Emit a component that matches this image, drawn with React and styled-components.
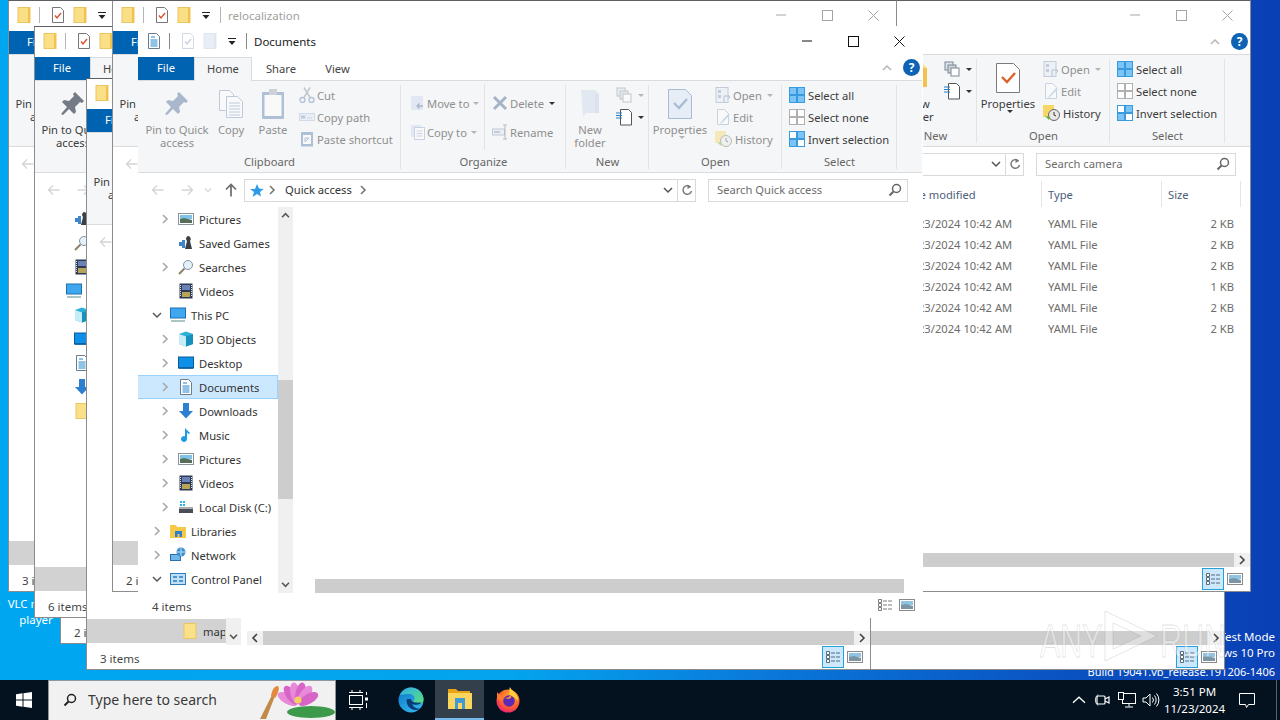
import React from "react";
import styled, { createGlobalStyle } from "styled-components";

const Global = createGlobalStyle`
  html, body { margin: 0; padding: 0; width: 1280px; height: 720px; overflow: hidden; }
  body { font-family: "Noto Sans", "Open Sans", sans-serif; font-size: 11.2px; color: #3c3c3c; }
  #root { width: 1280px; height: 720px; }
`;

const Screen = styled.div`
  width: 1280px;
  height: 720px;
  display: flex;
  flex-direction: column;
  overflow: hidden;
`;

const Wallpaper = styled.div`
  position: relative;
  flex: 1;
  overflow: hidden;
  background: linear-gradient(90deg, #00a6f0 0%, #04a4ee 40%, #0a78da 60%, #0a50c0 85%, #0a3fb5 100%);
`;

const DesktopIcon = styled.div`
  position: absolute;
  left: 1px;
  top: 556px;
  width: 70px;
  display: flex;
  flex-direction: column;
  align-items: center;
  gap: 6px;
  color: #fff;
  font-size: 11.5px;
  line-height: 16px;
  text-align: center;
`;

const Notice = styled.div`
  position: absolute;
  right: 5px;
  top: 629px;
  color: #fff;
  font-size: 11.5px;
  line-height: 16px;
  text-align: right;
  white-space: nowrap;
`;

const BuildLine = styled.div`
  margin-top: 3px;
  font-size: 11px;
`;

const Watermark = styled.div`
  position: absolute;
  left: 1040px;
  top: 609px;
  width: 186px;
  height: 54px;
  z-index: 1;
  display: flex;
  align-items: center;
  justify-content: space-between;
  color: rgba(255, 255, 255, 0.42);
  -webkit-text-stroke: 1px rgba(130, 130, 130, 0.22);
  font-family: "Liberation Sans", sans-serif;
  font-size: 46px;
  line-height: 54px;
`;

const MarkWord = styled.span`
  display: inline-block;
  width: 60px;
  margin-top: 10px;
  white-space: nowrap;
  transform: scaleX(0.66);
  transform-origin: ${(p) => (p.$end ? "right" : "left")} center;
  direction: ${(p) => (p.$end ? "rtl" : "ltr")};
`;

/* one explorer window, the desktop is a stack of these */
const Win = styled.div`
  position: absolute;
  left: ${(p) => p.$x}px;
  top: ${(p) => p.$y}px;
  width: 785px;
  height: 592px;
  isolation: isolate;
  box-sizing: border-box;
  display: flex;
  flex-direction: column;
  background: #fff;
  border: 1px solid ${(p) => (p.$active ? "#fff" : "#8c8c8c")};
  border-top-color: ${(p) => (p.$active ? "#fff" : "#5c5f63")};
  border-left: none;
  overflow: hidden;
  &::before {
    content: "";
    position: absolute;
    left: 0;
    top: 0;
    bottom: 0;
    width: 1px;
    z-index: 2;
    background: ${(p) => (p.$active ? "transparent" : "#8c8c8c")};
  }
`;

const TitleBar = styled.div`
  height: 30px;
  flex: none;
  box-sizing: border-box;
  display: flex;
  align-items: center;
  padding: 0 0 2px 8px;
`;

const QatIcon = styled.span`
  display: inline-flex;
  width: 16px;
  height: 18px;
  align-items: center;
  justify-content: center;
  margin-right: ${(p) => p.$gap || 0}px;
`;

const QatSep = styled.span`
  width: 1px;
  height: 16px;
  background: ${(p) => (p.$active ? "#8a8a8a" : "#b5b5b5")};
  margin-right: ${(p) => p.$gap}px;
`;

const TitleText = styled.span`
  font-size: 11.5px;
  color: ${(p) => (p.$active ? "#1a1a1a" : "#a0a0a0")};
`;

const Controls = styled.div`
  margin-left: auto;
  display: flex;
`;

const ControlBtn = styled.span`
  width: 46px;
  height: 28px;
  display: flex;
  align-items: center;
  justify-content: center;
`;

const TabRow = styled.div`
  height: 24px;
  flex: none;
  box-sizing: border-box;
  display: flex;
  align-items: stretch;
  border-bottom: 1px solid #dadbdc;
`;

const FileTab = styled.div`
  width: 56px;
  box-sizing: border-box;
  padding-bottom: 2px;
  background: #0063b1;
  color: #fff;
  display: flex;
  align-items: center;
  justify-content: center;
`;

const Tab = styled.div`
  width: ${(p) => p.$w}px;
  box-sizing: border-box;
  height: ${(p) => (p.$on ? "24px" : "23px")};
  padding-bottom: 2px;
  color: #444;
  display: flex;
  align-items: center;
  justify-content: center;
  background: ${(p) => (p.$on ? "#f5f6f7" : "transparent")};
  border: 1px solid ${(p) => (p.$on ? "#dadbdc" : "transparent")};
  border-bottom: none;
`;

const TabExtras = styled.div`
  margin-left: auto;
  display: flex;
  align-items: center;
  gap: 11px;
  padding: 0 2px 2px 0;
`;

const HelpBadge = styled.span`
  width: 17px;
  height: 17px;
  border-radius: 50%;
  background: #0f63b5;
  color: #fff;
  font-size: 12px;
  font-weight: 700;
  display: flex;
  align-items: center;
  justify-content: center;
`;

const Ribbon = styled.div`
  height: 92px;
  flex: none;
  box-sizing: border-box;
  display: flex;
  background: #f5f6f7;
  border-bottom: 1px solid #dadbdc;
`;

const Group = styled.div`
  width: ${(p) => p.$w}px;
  flex: none;
  box-sizing: border-box;
  display: flex;
  flex-direction: column;
  padding-top: 3px;
  background: linear-gradient(#e2e3e4, #e2e3e4) right 4px / 1px 84px no-repeat;
`;

const GroupBody = styled.div`
  flex: 1;
  min-height: 0;
  display: flex;
  padding-left: ${(p) => p.$pad || 0}px;
`;

const GroupLabel = styled.div`
  height: 19px;
  line-height: 17px;
  text-align: center;
  color: #666;
`;

const LargeBtn = styled.div`
  width: ${(p) => p.$w}px;
  flex: none;
  display: flex;
  flex-direction: column;
  align-items: center;
  padding-top: 4px;
  color: ${(p) => (p.$off ? "#8f8f8f" : "#3c3c3c")};
  text-align: center;
  white-space: nowrap;
  line-height: 13px;
`;

const LargeIcon = styled.span`
  height: 32px;
  margin-bottom: 3px;
  display: flex;
  align-items: center;
  justify-content: center;
`;

const SmallCol = styled.div`
  display: flex;
  flex-direction: column;
  gap: ${(p) => p.$gap || 0}px;
  padding-top: ${(p) => p.$top || 0}px;
  padding-left: ${(p) => p.$pad || 0}px;
  width: ${(p) => (p.$w ? `${p.$w}px` : "auto")};
  flex: none;
  box-sizing: border-box;
  border-right: ${(p) => (p.$rule ? "1px solid #e2e3e4" : "none")};
  margin-bottom: ${(p) => (p.$rule ? "3px" : "0")};
`;

const SmallBtn = styled.div`
  height: 22px;
  display: flex;
  align-items: center;
  gap: ${(p) => p.$gap ?? 3}px;
  white-space: nowrap;
  color: ${(p) => (p.$off ? "#8f8f8f" : "#3c3c3c")};
`;

const Caret = styled.span`
  width: 0;
  height: 0;
  margin-left: 3px;
  border: 3px solid transparent;
  border-top: 3px solid ${(p) => (p.$off ? "#b5b5b5" : "#333")};
  border-bottom: none;
`;

const NavRow = styled.div`
  height: 34px;
  flex: none;
  display: flex;
  align-items: center;
  padding-left: 6px;
`;

const NavBtn = styled.span`
  width: ${(p) => p.$w}px;
  margin-right: ${(p) => p.$gap || 0}px;
  display: flex;
  justify-content: center;
`;

const AddressBox = styled.div`
  width: 452px;
  height: 23px;
  box-sizing: border-box;
  flex: none;
  display: flex;
  align-items: center;
  border: 1px solid #d9d9d9;
  padding-left: 4px;
  color: #333;
`;

const Crumb = styled.span`
  display: inline-flex;
  margin: 0 ${(p) => p.$after ?? 6}px 0 ${(p) => p.$gap || 0}px;
  padding-bottom: 1px;
  white-space: nowrap;
`;

const AddressTail = styled.div`
  margin-left: auto;
  display: flex;
  align-items: center;
  height: 100%;
`;

const AddressDrop = styled.span`
  width: 15px;
  display: flex;
  justify-content: center;
  padding-right: 2px;
`;

const RefreshBtn = styled.span`
  width: 17px;
  height: 100%;
  border-left: 1px solid #d9d9d9;
  display: flex;
  align-items: center;
  justify-content: center;
`;

const SearchBox = styled.div`
  width: 200px;
  height: 23px;
  flex: none;
  box-sizing: border-box;
  margin-left: 12px;
  border: 1px solid #d9d9d9;
  display: flex;
  align-items: center;
  justify-content: space-between;
  padding: 0 5px 1px 8px;
  color: #6d6d6d;
`;

const Body = styled.div`
  flex: 1;
  min-height: 0;
  display: flex;
`;

const NavPane = styled.div`
  width: 155px;
  flex: none;
  display: flex;
`;

const Tree = styled.div`
  width: 140px;
  flex: none;
  overflow: hidden;
`;

const TreeRow = styled.div`
  height: 24px;
  box-sizing: border-box;
  display: flex;
  align-items: center;
  padding-left: ${(p) => 13 + 8 * (p.$level - 1)}px;
  white-space: nowrap;
  overflow: hidden;
  color: #333;
  background: ${(p) => (p.$sel === "on" ? "#cce8ff" : p.$sel === "dim" ? "#d2d2d2" : "transparent")};
  border: 1px solid ${(p) => (p.$sel === "on" ? "#99d1ff" : "transparent")};
  border-width: 1px 1px 1px 0;
`;

const Chev = styled.span`
  width: 12px;
  flex: none;
  margin-right: 7px;
  display: flex;
  justify-content: center;
`;

const TreeLabel = styled.span`
  margin-left: 5px;
`;

const VScroll = styled.div`
  width: 15px;
  flex: none;
  display: flex;
  flex-direction: column;
  background: #f0f0f0;
`;

const ScrollEnd = styled.span`
  height: 17px;
  flex: none;
  display: flex;
  align-items: center;
  justify-content: center;
`;

const VTrack = styled.div`
  flex: 1;
  min-height: 0;
`;

const VThumb = styled.div`
  height: ${(p) => p.$h}px;
  margin-top: ${(p) => p.$top}px;
  background: #cdcdcd;
`;

const Content = styled.div`
  flex: 1;
  min-width: 0;
  margin-left: 6px;
  display: flex;
  flex-direction: column;
`;

const FileList = styled.div`
  flex: 1;
  min-height: 0;
`;

const ListHead = styled.div`
  display: grid;
  grid-template-columns: 268px 147px 120px 79px;
  height: 26px;
  margin-bottom: 6px;
  color: #4c607a;
`;

const HeadCell = styled.div`
  display: flex;
  align-items: center;
  padding-left: 6px;
  box-sizing: border-box;
  border-right: 1px solid #e5e5e5;
`;

const ListRow = styled.div`
  display: grid;
  grid-template-columns: 268px 147px 120px 79px;
  height: 21px;
  align-items: center;
  color: #6d6d6d;
`;

const Cell = styled.div`
  padding: 0 7px 0 6px;
  text-align: ${(p) => (p.$right ? "right" : "left")};
  white-space: nowrap;
`;

const HScroll = styled.div`
  height: 14px;
  flex: none;
  display: flex;
  margin-right: ${(p) => (p.$bare ? 2 : 0)}px;
`;

const HEnd = styled.span`
  width: ${(p) => p.$w}px;
  flex: none;
  display: flex;
  align-items: center;
  justify-content: center;
  background: ${(p) => (p.$bare ? "transparent" : "#f0f0f0")};
  visibility: ${(p) => (p.$bare ? "hidden" : "visible")};
`;

const HThumb = styled.div`
  flex: 1;
  background: #cdcdcd;
`;

const StatusBar = styled.div`
  height: 24px;
  flex: none;
  box-sizing: border-box;
  display: flex;
  align-items: center;
  padding: 2px 0 0 14px;
  color: #444;
  font-size: 11.5px;
`;

const ViewBtns = styled.div`
  margin-left: auto;
  display: flex;
  padding-right: 4px;
  margin-top: -2px;
`;

const ViewBtn = styled.span`
  width: 22px;
  height: 22px;
  box-sizing: border-box;
  display: flex;
  align-items: center;
  justify-content: center;
  background: ${(p) => (p.$on ? "#cce8ff" : "transparent")};
  border: 1px solid ${(p) => (p.$on ? "#26a0da" : "transparent")};
`;

const Taskbar = styled.div`
  height: 40px;
  flex: none;
  display: flex;
  align-items: stretch;
  background: #04121f;
  color: #fff;
`;

const TaskBtn = styled.div`
  width: ${(p) => p.$w || 48}px;
  flex: none;
  box-sizing: border-box;
  display: flex;
  align-items: center;
  justify-content: center;
  background: ${(p) => (p.$on ? "#33404c" : "transparent")};
  border-bottom: ${(p) => (p.$on ? "2px solid #76b9ed" : "none")};
`;

const SearchBar = styled.div`
  width: 288px;
  flex: none;
  box-sizing: border-box;
  display: flex;
  align-items: center;
  padding: 0 0 2px 14px;
  gap: 11px;
  background: #f1f1f1;
  border: 1px solid #8f969c;
  border-bottom: none;
  color: #3a3a3a;
  font-size: 14px;
  overflow: hidden;
`;

const SearchArt = styled.span`
  margin-left: auto;
  height: 38px;
  margin-top: 1px;
`;

const Tray = styled.div`
  margin-left: auto;
  display: flex;
  align-items: stretch;
`;

const TrayIcon = styled.span`
  width: ${(p) => p.$w || 24}px;
  display: flex;
  align-items: center;
  justify-content: center;
`;

const Clock = styled.div`
  width: 65px;
  display: flex;
  flex-direction: column;
  align-items: center;
  justify-content: center;
  font-size: 11.5px;
  line-height: 17px;
`;

const ShowDesktop = styled.span`
  width: 13px;
  box-sizing: border-box;
  padding-left: 9px;
  display: block;
  &::after { content: ""; display: block; width: 1px; height: 40px; background: #56616b; }
`;

/* ---------- small drawings ---------- */

const Svg = ({ s = 16, w, h, off, children }) => (
  <svg width={w || s} height={h || s} viewBox={`0 0 ${w || s} ${h || s}`} opacity={off ? 0.42 : 1} style={{ flex: "none" }}>
    {children}
  </svg>
);

const FolderQat = ({ off }) => (
  <Svg off={off}>
    <rect x="2" y="0.5" width="12" height="15" fill={off ? "#c9d6ea" : "#fbdf87"} stroke={off ? "#b9c8e0" : "#ecc662"} />
    <rect x="12" y="1" width="2" height="14" fill={off ? "#b9c8e0" : "#f2c14e"} />
  </Svg>
);

const CheckDoc = ({ off }) => (
  <Svg off={off}>
    <path d="M2.5.5h8l3 3v12h-11z" fill="#fff" stroke={off ? "#8fa6c6" : "#777"} />
    <path d="M5 8.5l2 2.5 4-5" fill="none" stroke={off ? "#7d95b8" : "#d8512c"} strokeWidth="1.4" />
  </Svg>
);

const DocIco = () => (
  <Svg>
    <path d="M2.5.5h8l3 3v12h-11z" fill="#fff" stroke="#6e7b88" />
    <path d="M5 4h4M4.5 7h7M4.5 9h7M4.5 11h7M4.5 13h7" stroke="#1f86d0" strokeWidth="1" />
  </Svg>
);

const CustomizeArrow = () => (
  <Svg s={10}>
    <path d="M1 2.5h8" stroke="#222" />
    <path d="M1.5 5h7L5 9z" fill="#222" />
  </Svg>
);

const Back = ({ up }) => (
  <Svg s={14}>
    {up ? (
      <path d="M7 1.5v12M2 6.5l5-5 5 5" fill="none" stroke="#6b6b6b" strokeWidth="1.7" />
    ) : (
      <path d="M12.5 7h-11M6 2.5L1.5 7 6 11.5" fill="none" stroke="#d5d5d5" strokeWidth="1.4" />
    )}
  </Svg>
);

const Forward = () => (
  <Svg s={14}>
    <path d="M1.5 7h11M8 2.5L12.5 7 8 11.5" fill="none" stroke="#d5d5d5" strokeWidth="1.4" />
  </Svg>
);

const Vee = ({ s = 8, c = "#d5d5d5", up, w = 1.3 }) => (
  <Svg s={s}>
    <path d={up ? `M1 ${s * 0.7}L${s / 2} ${s * 0.3}L${s - 1} ${s * 0.7}` : `M1 ${s * 0.3}L${s / 2} ${s * 0.7}L${s - 1} ${s * 0.3}`} fill="none" stroke={c} strokeWidth={w} />
  </Svg>
);

const Side = ({ c = "#a9a9a9", left }) => (
  <Svg s={10}>
    <path d={left ? "M7 1L3 5l4 4" : "M3 1l4 4-4 4"} fill="none" stroke={c} strokeWidth="1.6" />
  </Svg>
);

const Pin = ({ off }) => (
  <Svg s={30}>
    <path d="M17 3l9 9-2 2-2-1-5 5 1 5-2 2-5-5-6 6-2-1 6-7-5-5 2-2 5 1 5-5-1-2z" fill={off ? "#a9b7cc" : "#757b84"} />
  </Svg>
);

const CopyLarge = ({ off }) => (
  <Svg w={28} h={30} off={off}>
    <path d="M2.5 1.5h10l4 4v16h-14z" fill="#fff" stroke="#6f8fb8" />
    <path d="M9.5 7.5h11l5 5v16h-16z" fill="#fff" stroke="#6f8fb8" />
    <path d="M12 14h11M12 17h11M12 20h11M12 23h11M12 26h11" stroke="#6f8fb8" />
  </Svg>
);

const PasteLarge = ({ off }) => (
  <Svg w={26} h={32} off={off}>
    <rect x="2" y="4" width="22" height="27" rx="1" fill="#4f76a8" />
    <rect x="4.5" y="7" width="17" height="21" fill="#fff" />
    <rect x="9" y="1" width="8" height="6" fill="#9aa0a8" />
  </Svg>
);

const Scissors = ({ off }) => (
  <Svg off={off}>
    <circle cx="3.5" cy="13" r="2.5" fill="none" stroke="#5b7fb0" strokeWidth="1.4" />
    <circle cx="12.5" cy="13" r="2.5" fill="none" stroke="#5b7fb0" strokeWidth="1.4" />
    <path d="M5 10.5L11 .5M11 10.5L5 .5" stroke="#7b8794" strokeWidth="1.5" />
  </Svg>
);

const CopyPath = ({ off }) => (
  <Svg off={off}>
    <rect x="0.5" y="4.5" width="15" height="7" fill="#dbe6f5" stroke="#9fb6d5" />
    <path d="M2 6.5l1 3 1-3 1 3 1-3M8 9h1M10 9h1M12 9h1" stroke="#5b7fb0" fill="none" />
  </Svg>
);

const PasteShort = ({ off }) => (
  <Svg off={off}>
    <rect x="2" y="1" width="12" height="14.5" fill="#4f76a8" />
    <rect x="4" y="4" width="8" height="9" fill="#fff" />
    <path d="M6 11V7h4M10 7L6.5 10.5" stroke="#4a78b5" fill="none" />
  </Svg>
);

const MoveTo = ({ off }) => (
  <Svg off={off}>
    <rect x="1" y="1" width="12" height="14" fill="#c6d6ee" />
    <path d="M13 11H7M9.5 8.5L7 11l2.5 2.5" stroke="#43638f" fill="none" strokeWidth="1.3" />
  </Svg>
);

const CopyTo = ({ off }) => (
  <Svg off={off}>
    <rect x="1" y="1" width="10" height="12" fill="#c6d6ee" />
    <rect x="4.5" y="3.5" width="10" height="12" fill="#fff" stroke="#8aa3c8" />
    <path d="M6.5 7h6M6.5 9.500h6M6.500 12h6" stroke="#8aa3c8" />
  </Svg>
);

const DeleteX = ({ off }) => (
  <Svg off={off}>
    <path d="M2 2l12 12M14 2L2 14" stroke="#3c5c85" strokeWidth="3" />
  </Svg>
);

const Rename = ({ off }) => (
  <Svg off={off}>
    <rect x="0.500" y="5" width="12" height="6" fill="#dbe6f5" stroke="#7d8ea6" />
    <rect x="2" y="7" width="6" height="2" fill="#7d8ea6" />
    <path d="M11 1h4M13 1v14M11 15h4" stroke="#667" />
  </Svg>
);

const NewFolderLarge = ({ off }) => (
  <Svg w={20} h={30} off={off}>
    <path d="M1 1h14l4 4v19H6l-3 4z" fill={off ? "#c9d6ea" : "#fbdf87"} />
    <rect x="15" y="5" width="4" height="19" fill={off ? "#b9c8e0" : "#f2c14e"} />
  </Svg>
);

const NewItem = ({ off }) => (
  <Svg off={off}>
    <rect x="1" y="1" width="8" height="8" fill="#dfe4ea" stroke="#7b8794" />
    <rect x="4" y="4" width="8" height="8" fill="#ccd4de" stroke="#7b8794" />
    <rect x="7" y="7" width="8" height="8" fill="#fff" stroke="#7b8794" />
  </Svg>
);

const EasyAccess = ({ off }) => (
  <Svg w={16} h={17} off={off}>
    <path d="M4.500.500h8l3 3v12.500h-11z" fill="#fff" stroke="#555" />
    <path d="M0 4h6M0 6.500h6M0 9h6" stroke="#2680c8" />
  </Svg>
);

const PropsLarge = ({ off }) => (
  <Svg w={24} h={30}>
    <path d="M.5.500h17l6 6v23H.5z" fill={off ? "#e6edf6" : "#fff"} stroke={off ? "#a9bcd6" : "#7b7b7b"} />
    <path d="M6 14l5 5 8-9" fill="none" stroke={off ? "#a9bcd6" : "#d9622b"} strokeWidth="2.400" />
  </Svg>
);

const OpenDoc = ({ off }) => (
  <Svg off={off}>
    <rect x="1" y="0.500" width="12" height="15" fill="#e3eaf4" stroke="#7d93b3" />
    <path d="M3 3h3v3H3zM3 8h3v3H3z" fill="#7d93b3" />
    <path d="M9 15V9h5M13 8l2 2-2 2" stroke="#5b7fb0" fill="none" />
  </Svg>
);

const EditDoc = ({ off }) => (
  <Svg off={off}>
    <path d="M2.500.500h7l4 4v11h-11z" fill="#fff" stroke="#8aa3c8" />
    <path d="M13 5L6 13l-1 2 2-1 8-8z" fill="#8fb4de" />
  </Svg>
);

const History = ({ off }) => (
  <Svg w={18} h={16} off={off}>
    <rect x="0" y="0" width="11" height="12" fill="#f7d766" />
    <circle cx="11" cy="10" r="5.500" fill="#e8e8e8" stroke="#666" />
    <path d="M11 7v3l2 1" stroke="#333" fill="none" />
    <path d="M2 11l4 4 1-3z" fill="#5fb030" />
  </Svg>
);

const SelGrid = ({ mode }) => {
  const cells = [[1, 1], [9, 1], [1, 9], [9, 9]];
  const lit = mode === "all" ? [0, 1, 2, 3] : mode === "invert" ? [1, 2] : [];
  return (
    <Svg>
      {cells.map(([x, y], i) => (
        <rect key={i} x={x - 0.5} y={y - 0.5} width="7" height="7" fill={lit.includes(i) ? "#7cc4f5" : "#fff"} stroke={lit.includes(i) ? "#3a9ae0" : mode === "none" ? "#b0b0b0" : "#3a9ae0"} />
      ))}
    </Svg>
  );
};

const Magnify = ({ c = "#666" }) => (
  <Svg s={14}>
    <circle cx="8.500" cy="5.500" r="4" fill="none" stroke={c} strokeWidth="1.500" />
    <path d="M5.500 8.500l-4 4" stroke={c} strokeWidth="2" />
  </Svg>
);

const Refresh = () => (
  <Svg s={12}>
    <path d="M9.500 3A4.300 4.300 0 1 0 10.500 7" fill="none" stroke="#777" strokeWidth="1.400" />
    <path d="M6.500 0.500l3.500 2.500-3.500 2z" fill="#777" />
  </Svg>
);

const Star = () => (
  <Svg s={15}>
    <path d="M8 1l2 4.500 4.500.500-3.500 3 1 4.500-4-2.400-4.500 2.900 1.500-5L1 6h5z" fill="#2d9be8" />
  </Svg>
);

const Pictures = () => (
  <Svg>
    <rect x="0.500" y="2.500" width="15" height="11" fill="#fff" stroke="#8a929a" />
    <rect x="2" y="4" width="12" height="4" fill="#7fc3e8" />
    <path d="M2 8l4-1 8 2v3H2z" fill="#55705a" />
  </Svg>
);

const SavedGames = () => (
  <Svg>
    <path d="M1 7h3V5h3v8H4v-2H1z" fill="#3f86c8" />
    <path d="M10 1a3 3 0 0 1 2 5l2 8H7l2-8a3 3 0 0 1 1-5z" fill="#3c3f44" />
  </Svg>
);

const Searches = () => (
  <Svg>
    <circle cx="10" cy="6" r="4.500" fill="#e5f1fa" stroke="#7d93a8" />
    <path d="M6.500 9.500L1 15" stroke="#8a7a66" strokeWidth="1.800" />
  </Svg>
);

const Videos = () => (
  <Svg>
    <rect x="1.500" y="0.500" width="13" height="15" fill="#2e3a55" />
    <rect x="4" y="2" width="8" height="5" fill="#6a82b8" />
    <rect x="4" y="9" width="8" height="5" fill="#b7a458" />
    <path d="M2.500 2v12M13.500 2v12" stroke="#dfe3ea" strokeDasharray="1 1" />
  </Svg>
);

const ThisPC = () => (
  <Svg>
    <rect x="0.500" y="1" width="15" height="10" fill="#3fa7ee" stroke="#1d6fb3" />
    <path d="M1 14h14" stroke="#7ba7a4" strokeWidth="1.300" />
  </Svg>
);

const Cube = () => (
  <Svg>
    <path d="M1 3l7-2.500L15 3v10l-7 2.500L1 13z" fill="#2db0d8" />
    <path d="M1 3l7 2.500v10L1 13z" fill="#c5edf6" />
    <path d="M8 5.500L15 3v10l-7 2.500z" fill="#1790bc" />
  </Svg>
);

const DesktopIco = () => (
  <Svg>
    <rect x="0.500" y="2" width="15" height="11" fill="#0e8fe8" stroke="#075c9c" />
    <path d="M1 13h14" stroke="#075c9c" strokeWidth="1.500" />
  </Svg>
);

const Downloads = () => (
  <Svg>
    <path d="M5 0h6v8h4l-7 7.500L1 8h4z" fill="#2d7fd0" />
  </Svg>
);

const Music = () => (
  <Svg>
    <path d="M7 1l5 5-1.200 1.200L9 5.500V12a3 3 0 1 1-2-2.800z" fill="#1d9be2" />
  </Svg>
);

const Disk = () => (
  <Svg>
    <rect x="1" y="9" width="14" height="5" fill="#4a4f55" />
    <rect x="1" y="8" width="14" height="2" fill="#a8adb3" />
    <path d="M2 2h2v2H2zM5 2h2v2H5zM2 5h2v2H2zM5 5h2v2H5z" fill="#26b6e8" />
  </Svg>
);

const Libraries = () => (
  <Svg>
    <path d="M0 2h6l1 2h9v11H0z" fill="#f7c948" />
    <rect x="5" y="8" width="7" height="6" fill="#2d7fd0" />
    <rect x="7.500" y="11" width="2" height="3" fill="#f7c948" />
  </Svg>
);

const Network = () => (
  <Svg>
    <rect x="0.500" y="7.500" width="10" height="6" fill="#6fb7e8" stroke="#2c6ea8" />
    <circle cx="11" cy="5" r="4.500" fill="#3f8fd0" />
    <path d="M7 5h8M11 1v8" stroke="#bfe0f5" />
  </Svg>
);

const ControlPanel = () => (
  <Svg>
    <rect x="0.500" y="2.500" width="15" height="11" fill="#bfe0f5" stroke="#2c7cbd" />
    <path d="M3 6h4M9 6h4M3 10h4M9 10h4" stroke="#2c7cbd" strokeWidth="1.500" />
  </Svg>
);

const Folder = () => (
  <Svg>
    <rect x="2" y="0.500" width="12" height="15" fill="#fbe08a" stroke="#ecc662" />
  </Svg>
);

const DetailsView = ({ c = "#7d7d7d" }) => (
  <Svg>
    <path d="M1.500 2.500h3v3h-3zM1.500 6.500h3v3h-3zM1.500 10.500h3v3h-3z" fill="#fff" stroke={c} />
    <path d="M6 4h4M11 4h4M6 8h4M11 8h4M6 12h4M11 12h4" stroke={c} />
  </Svg>
);

const LargeView = () => (
  <Svg>
    <rect x="0.500" y="2.500" width="15" height="11" fill="#fff" stroke="#8a8a8a" />
    <rect x="2" y="4" width="12" height="4" fill="#8fc4e4" />
    <path d="M2 8l5-1 7 2v3H2z" fill="#7c95a4" />
  </Svg>
);

const Play = () => (
  <svg width="62" height="54" viewBox="0 0 62 54" style={{ flex: "none" }}>
    <path d="M3 2l52 25L3 52zM11 14v26l28-13z" fill="rgba(255,255,255,0.34)" stroke="rgba(130,130,130,0.2)" fillRule="evenodd" />
  </svg>
);

const Cone = () => (
  <Svg w={32} h={34}>
    <path d="M12 2h8l8 28H4z" fill="#f08a1d" />
    <rect x="2" y="30" width="28" height="4" fill="#e7e7e7" />
  </Svg>
);

const WinLogo = () => (
  <Svg>
    <path d="M0 2.200l6.500-.900v6.200H0zM7.500 1.200L16 0v7.500H7.500zM0 8.500h6.500v6.200L0 13.800zM7.500 8.500H16V16l-8.500-1.200z" fill="#fff" />
  </Svg>
);

const TaskView = () => (
  <Svg w={24} h={20}>
    <rect x="1.500" y="5.500" width="13" height="9" fill="none" stroke="#fff" />
    <path d="M1 2.500h14M1 17.500h14M4 2.500V0M12 2.500V0M4 20v-2.500M12 20v-2.500" stroke="#fff" />
    <rect x="17" y="7.500" width="3" height="3" fill="#fff" />
    <path d="M18.500 2v3M18.500 13v5" stroke="#fff" />
  </Svg>
);

const Edge = () => (
  <svg width="26" height="26" viewBox="0 0 26 26">
    <defs>
      <linearGradient id="edgeBlue" x1="0" y1="0" x2="0.600" y2="1">
        <stop offset="0" stopColor="#0a74c4" />
        <stop offset="1" stopColor="#2fb3ee" />
      </linearGradient>
      <linearGradient id="edgeGreen" x1="0" y1="0" x2="1" y2="1">
        <stop offset="0" stopColor="#2bb0e8" />
        <stop offset="1" stopColor="#5fe07a" />
      </linearGradient>
    </defs>
    <circle cx="13" cy="13" r="12.500" fill="url(#edgeBlue)" />
    <path d="M2 8C4 3 9 .5 13 .5 20 .5 25.500 6 25.500 12.500c0 3-3 5-6.500 5-2.500 0-5-1-5-2 1.500-1 2.500-2.500 2.500-4 0-3-3-5-7-4.500C6 7.500 4 7.500 2 8z" fill="url(#edgeGreen)" />
    <path d="M8.500 13.500c0 5 4 9.500 9 9.500 2 0 3.500-.500 5-2-2 1-4 .500-5.500-.500-1.500-1-2.500-2-2.500-3.500 3 1.500 7 1 9-1.500-2 0-6 .500-8-.500-1.500-.500-2.500-2-2.500-3-1 0-5-.500-4.500 1.500z" fill="#0b3c78" />
  </svg>
);

const ExplorerIco = () => (
  <Svg w={24} h={22}>
    <path d="M0 1h8l2 2h12v3H0z" fill="#e8a317" />
    <rect x="0" y="5" width="24" height="16" fill="#fbd65e" />
    <rect x="7" y="10" width="10" height="11" fill="#3f9ad6" />
    <rect x="10" y="15" width="4" height="6" fill="#fbd65e" />
  </Svg>
);

const Firefox = () => (
  <svg width="24" height="26" viewBox="0 0 24 26">
    <defs>
      <radialGradient id="foxGlow" cx="0.600" cy="0.300" r="0.800">
        <stop offset="0" stopColor="#ffb02e" />
        <stop offset="0.600" stopColor="#ff5b2e" />
        <stop offset="1" stopColor="#e31587" />
      </radialGradient>
    </defs>
    <circle cx="12" cy="14" r="11.500" fill="url(#foxGlow)" />
    <path d="M14 0c1 3 4 4 6 7 2 2 2 5 2 7-3-4-5-4-8-6-1-3-1-5 0-8z" fill="#ffcf3a" />
    <path d="M1 5c2 2 3 4 7 4l-3 5L1 12z" fill="#ff7a2e" />
    <circle cx="13" cy="14" r="5.800" fill="#5b2bb5" />
    <path d="M8 11c3 0 5-1 7-3 1 2 0 3-2 4z" fill="#ff8a2e" />
  </svg>
);

const Lotus = () => (
  <svg width="76" height="38" viewBox="0 0 76 38">
    <path d="M1 38l12-24 3 1-9 23z" fill="#c28a4a" />
    <path d="M12 15c1-6 3-10 7-10 2 2 0 8-3 12z" fill="#e58a3c" />
    <ellipse cx="52" cy="31" rx="24" ry="6" fill="#3c9a4a" />
    {[-60, -35, -12, 12, 35, 60].map((a, i) => (
      <ellipse key={i} cx="39" cy="12" rx="5" ry="11" fill={i % 2 ? "#d765c8" : "#e88ad8"} transform={`rotate(${a} 39 24)`} />
    ))}
    <circle cx="39" cy="19" r="3.500" fill="#f2d25c" />
  </svg>
);

const TrayCam = () => (
  <Svg w={18} h={18}>
    <path d="M4 3.500a7 7 0 0 0 0 11" fill="none" stroke="#ddd" />
    <rect x="3" y="5" width="8" height="8" rx="1" fill="none" stroke="#fff" strokeWidth="1.200" />
    <path d="M11 8l4-2v6l-4-2" fill="none" stroke="#fff" strokeWidth="1.200" />
  </Svg>
);

const TrayNet = () => (
  <Svg w={18} h={18}>
    <rect x="4.500" y="2.500" width="13" height="10" fill="none" stroke="#fff" />
    <rect x="0.500" y="1.500" width="5" height="7" fill="#04121f" stroke="#fff" />
    <path d="M11 12.500v3M7 16h8" stroke="#fff" />
  </Svg>
);

const TrayVol = () => (
  <Svg w={18} h={18}>
    <path d="M1 7v4h3l4 4V3L4 7z" fill="none" stroke="#fff" />
    <path d="M10.500 6.500a4 4 0 0 1 0 5M12.500 4.500a7 7 0 0 1 0 9M14.500 2.500a10 10 0 0 1 0 13" fill="none" stroke="#fff" />
  </Svg>
);

const TrayNote = () => (
  <Svg w={18} h={18}>
    <path d="M1.500 2.500h15v11h-6l-2 3-1-3h-6z" fill="none" stroke="#fff" />
  </Svg>
);

/* ---------- window ---------- */

const frontTree = [
  { level: 2, label: "Pictures", icon: <Pictures />, chev: "side" },
  { level: 2, label: "Saved Games", icon: <SavedGames /> },
  { level: 2, label: "Searches", icon: <Searches />, chev: "side" },
  { level: 2, label: "Videos", icon: <Videos /> },
  { level: 1, label: "This PC", icon: <ThisPC />, chev: "open" },
  { level: 2, label: "3D Objects", icon: <Cube />, chev: "side" },
  { level: 2, label: "Desktop", icon: <DesktopIco />, chev: "side" },
  { level: 2, label: "Documents", icon: <DocIco />, chev: "side", sel: "on" },
  { level: 2, label: "Downloads", icon: <Downloads />, chev: "side" },
  { level: 2, label: "Music", icon: <Music />, chev: "side" },
  { level: 2, label: "Pictures", icon: <Pictures />, chev: "side" },
  { level: 2, label: "Videos", icon: <Videos />, chev: "side" },
  { level: 2, label: "Local Disk (C:)", icon: <Disk />, chev: "side" },
  { level: 1, label: "Libraries", icon: <Libraries />, chev: "side" },
  { level: 1, label: "Network", icon: <Network />, chev: "side" },
  { level: 1, label: "Control Panel", icon: <ControlPanel />, chev: "open" },
];

// windows further back: their labels are covered, only icons at the edge and the selected row show
const backTree = (selected) => [
  { level: 2, icon: <SavedGames /> },
  { level: 2, icon: <Searches /> },
  { level: 2, icon: <Videos /> },
  { level: 1, icon: <ThisPC /> },
  { level: 2, icon: <Cube /> },
  { level: 2, icon: <DesktopIco /> },
  { level: 2, icon: <DocIco /> },
  { level: 2, icon: <Downloads /> },
  { level: 2, icon: <Folder /> },
  ...[9, 10, 11, 12, 13, 14].map(() => ({ spacer: true })),
  { level: 9, label: selected, icon: <Folder />, sel: "dim" },
];

const cameraFiles = ["2 KB", "2 KB", "2 KB", "1 KB", "2 KB", "2 KB"];

// parts: which ribbon groups this window still shows past the windows stacked over it
function WindowRibbon({ quick, propsOn, parts }) {
  const off = quick;
  const has = (name) => parts.includes(name);
  return (
    <Ribbon>
      <Group $w={263}>
        {(has("clipboard") || has("pin")) && (
          <>
            <GroupBody $pad={8}>
              <LargeBtn $w={62} $off={off}>
                <LargeIcon><Pin off={off} /></LargeIcon>
                Pin to Quick
                <br />
                access
              </LargeBtn>
              {has("clipboard") && (
                <>
                  <LargeBtn $w={46} $off={off}>
                    <LargeIcon><CopyLarge off={off} /></LargeIcon>
                    Copy
                  </LargeBtn>
                  <LargeBtn $w={38} $off={off}>
                    <LargeIcon><PasteLarge off={off} /></LargeIcon>
                    Paste
                  </LargeBtn>
                  <SmallCol $pad={7}>
                    <SmallBtn $off={off} $gap={2}><Scissors off={off} />Cut</SmallBtn>
                    <SmallBtn $off={off} $gap={2}><CopyPath off={off} />Copy path</SmallBtn>
                    <SmallBtn $off={off} $gap={2}><PasteShort off={off} />Paste shortcut</SmallBtn>
                  </SmallCol>
                </>
              )}
            </GroupBody>
            {has("clipboard") && <GroupLabel>Clipboard</GroupLabel>}
          </>
        )}
      </Group>
      <Group $w={165}>
        {has("organize") && (
          <>
            <GroupBody $pad={9}>
              <SmallCol $w={75} $top={8} $gap={7} $rule>
                <SmallBtn $off={off} $gap={1}><MoveTo off={off} />Move to<Caret $off /></SmallBtn>
                <SmallBtn $off={off} $gap={1}><CopyTo off={off} />Copy to<Caret $off /></SmallBtn>
              </SmallCol>
              <SmallCol $pad={7} $top={8} $gap={7}>
                <SmallBtn $off={off} $gap={2}><DeleteX off={off} />Delete<Caret /></SmallBtn>
                <SmallBtn $off={off} $gap={2}><Rename off={off} />Rename</SmallBtn>
              </SmallCol>
            </GroupBody>
            <GroupLabel>Organize</GroupLabel>
          </>
        )}
      </Group>
      {has("new") && (
        <>
          <Group $w={83}>
            <GroupBody>
              <LargeBtn $w={48} $off={off}>
                <LargeIcon><NewFolderLarge off={off} /></LargeIcon>
                New
                <br />
                folder
              </LargeBtn>
              <SmallCol $pad={2}>
                <SmallBtn><NewItem off={off} /><Caret $off={off} /></SmallBtn>
                <SmallBtn><EasyAccess /><Caret /></SmallBtn>
              </SmallCol>
            </GroupBody>
            <GroupLabel>New</GroupLabel>
          </Group>
          <Group $w={133}>
            <GroupBody>
              <LargeBtn $w={62} $off={!propsOn}>
                <LargeIcon><PropsLarge off={!propsOn} /></LargeIcon>
                Properties
                <Caret $off={!propsOn} />
              </LargeBtn>
              <SmallCol $pad={4}>
                <SmallBtn $off $gap={2}><OpenDoc off />Open<Caret $off /></SmallBtn>
                <SmallBtn $off $gap={2}><EditDoc off />Edit</SmallBtn>
                <SmallBtn $off={!propsOn} $gap={2}><History off={!propsOn} />History</SmallBtn>
              </SmallCol>
            </GroupBody>
            <GroupLabel>Open</GroupLabel>
          </Group>
          <Group $w={115}>
            <GroupBody $pad={7}>
              <SmallCol>
                <SmallBtn><SelGrid mode="all" />Select all</SmallBtn>
                <SmallBtn><SelGrid mode="none" />Select none</SmallBtn>
                <SmallBtn><SelGrid mode="invert" />Invert selection</SmallBtn>
              </SmallCol>
            </GroupBody>
            <GroupLabel>Select</GroupLabel>
          </Group>
        </>
      )}
    </Ribbon>
  );
}

function ExplorerWindow({ x, y, title, active, quick, qatIcon, tree = [], thumb, files, items, search, propsOn, bareScroll, plainView, tabs = [], parts = [] }) {
  const ctl = active ? "#111" : "#a5a5a5";
  return (
    <Win $x={x} $y={y} $active={active}>
      <TitleBar>
        <QatIcon $gap={7}>{qatIcon || <FolderQat />}</QatIcon>
        <QatSep $gap={10} $active={active} />
        <QatIcon $gap={6}><CheckDoc off={quick} /></QatIcon>
        <QatIcon $gap={6}><FolderQat off={quick} /></QatIcon>
        <QatIcon $gap={6}><CustomizeArrow /></QatIcon>
        <QatSep $gap={7} $active={active} />
        {title && <TitleText $active={active}>{title}</TitleText>}
        <Controls>
          <ControlBtn><Svg s={10}><path d="M0 5h10" stroke={ctl} /></Svg></ControlBtn>
          <ControlBtn><Svg s={11}><rect x="0.500" y="0.500" width="10" height="10" fill="none" stroke={ctl} /></Svg></ControlBtn>
          <ControlBtn><Svg s={11}><path d="M.5.500l10 10M10.500.500l-10 10" stroke={ctl} /></Svg></ControlBtn>
        </Controls>
      </TitleBar>
      <TabRow>
        <FileTab>File</FileTab>
        <Tab $w={58} $on>{tabs.includes("Home") && "Home"}</Tab>
        <Tab $w={58}>{tabs.includes("Share") && "Share"}</Tab>
        <Tab $w={55}>{tabs.includes("View") && "View"}</Tab>
        <TabExtras>
          <Vee s={10} c="#b5b5b5" up w={1.5} />
          <HelpBadge>?</HelpBadge>
        </TabExtras>
      </TabRow>
      <WindowRibbon quick={quick} propsOn={propsOn} parts={parts} />
      <NavRow>
        <NavBtn $w={27}><Back /></NavBtn>
        <NavBtn $w={31}><Forward /></NavBtn>
        <NavBtn $w={12} $gap={4}><Vee /></NavBtn>
        <NavBtn $w={26}><Back up /></NavBtn>
        <AddressBox>
          <Star />
          <Crumb $gap={3} $after={8}><Side c="#777" /></Crumb>
          {quick ? <Crumb>Quick access</Crumb> : null}
          {quick ? <Side c="#777" /> : null}
          <AddressTail>
            <AddressDrop><Vee s={10} c="#555" w={1.5} /></AddressDrop>
            <RefreshBtn><Refresh /></RefreshBtn>
          </AddressTail>
        </AddressBox>
        <SearchBox>{search}<Magnify /></SearchBox>
      </NavRow>
      <Body>
        <NavPane>
          <Tree>
            {tree.map((row, i) =>
              row.spacer ? (
                <TreeRow key={i} $level={1} />
              ) : (
                <TreeRow key={i} $level={row.level} $sel={row.sel}>
                  <Chev>
                    {row.chev === "side" && <Side />}
                    {row.chev === "open" && <Vee s={10} c="#555" w={1.5} />}
                  </Chev>
                  {row.icon}
                  {row.label && <TreeLabel>{row.label}</TreeLabel>}
                </TreeRow>
              )
            )}
          </Tree>
          <VScroll>
            <ScrollEnd><Vee s={9} c="#555" up w={1.5} /></ScrollEnd>
            <VTrack>{thumb && <VThumb $top={thumb.top} $h={thumb.height} />}</VTrack>
            <ScrollEnd><Vee s={9} c="#555" w={1.5} /></ScrollEnd>
          </VScroll>
        </NavPane>
        <Content>
          <FileList>
            {files && (
              <>
                <ListHead>
                  <HeadCell />
                  <HeadCell>Date modified</HeadCell>
                  <HeadCell>Type</HeadCell>
                  <HeadCell>Size</HeadCell>
                </ListHead>
                {files.map((size, i) => (
                  <ListRow key={i}>
                    <Cell />
                    <Cell>11/23/2024 10:42 AM</Cell>
                    <Cell>YAML File</Cell>
                    <Cell $right>{size}</Cell>
                  </ListRow>
                ))}
              </>
            )}
          </FileList>
          <HScroll $bare={bareScroll}>
            <HEnd $w={16} $bare={bareScroll}><Side c="#444" left /></HEnd>
            <HThumb />
            <HEnd $w={16} $bare={bareScroll}><Side c="#444" /></HEnd>
          </HScroll>
        </Content>
      </Body>
      <StatusBar>
        {items}
        <ViewBtns>
          <ViewBtn $on={!plainView}><DetailsView c={plainView ? "#7d7d7d" : "#5b6a75"} /></ViewBtn>
          <ViewBtn><LargeView /></ViewBtn>
        </ViewBtns>
      </StatusBar>
    </Win>
  );
}

export default function App() {
  return (
    <Screen>
      <Global />
      <Wallpaper>
        <DesktopIcon>
          <Cone />
          <span>VLC media player</span>
        </DesktopIcon>
        <Notice>
          Test Mode
          <br />
          Windows 10 Pro
          <BuildLine>Build 19041.vb_release.191206-1406</BuildLine>
        </Notice>

        <ExplorerWindow x={440} y={78} />
        <ExplorerWindow x={466} y={0} search="Search camera" files={cameraFiles} propsOn parts={["new"]} />
        <ExplorerWindow x={60} y={52} items="2 items" />
        <ExplorerWindow x={8} y={0} items="3 items" tree={backTree()} parts={["pin"]} />
        <ExplorerWindow x={34} y={26} items="6 items" tree={backTree()} parts={["pin"]} tabs={["Home"]} />
        <ExplorerWindow x={86} y={78} items="3 items" tree={backTree("map")} parts={["pin"]} />
        <ExplorerWindow x={112} y={0} title="relocalization" items="2 items" tree={backTree()} parts={["pin"]} />
        <ExplorerWindow
          x={138}
          y={26}
          title="Documents"
          active
          quick
          qatIcon={<DocIco />}
          items="4 items"
          search="Search Quick access"
          tree={frontTree}
          thumb={{ top: 156, height: 119 }}
          tabs={["Home", "Share", "View"]}
          parts={["clipboard", "organize", "new"]}
          bareScroll
          plainView
        />

        <Watermark>
          <MarkWord>ANY</MarkWord>
          <Play />
          <MarkWord $end>RUN</MarkWord>
        </Watermark>
      </Wallpaper>
      <Taskbar>
        <TaskBtn><WinLogo /></TaskBtn>
        <SearchBar>
          <Magnify c="#222" />
          Type here to search
          <SearchArt><Lotus /></SearchArt>
        </SearchBar>
        <TaskBtn><TaskView /></TaskBtn>
        <TaskBtn $w={3} />
        <TaskBtn><Edge /></TaskBtn>
        <TaskBtn $on $w={49}><ExplorerIco /></TaskBtn>
        <TaskBtn><Firefox /></TaskBtn>
        <Tray>
          <TrayIcon><Vee s={14} c="#fff" up w={1.3} /></TrayIcon>
          <TrayIcon><TrayCam /></TrayIcon>
          <TrayIcon><TrayNet /></TrayIcon>
          <TrayIcon $w={23}><TrayVol /></TrayIcon>
          <Clock>
            <span>3:51 PM</span>
            <span>11/23/2024</span>
          </Clock>
          <TrayIcon $w={40}><TrayNote /></TrayIcon>
          <ShowDesktop />
        </Tray>
      </Taskbar>
    </Screen>
  );
}
